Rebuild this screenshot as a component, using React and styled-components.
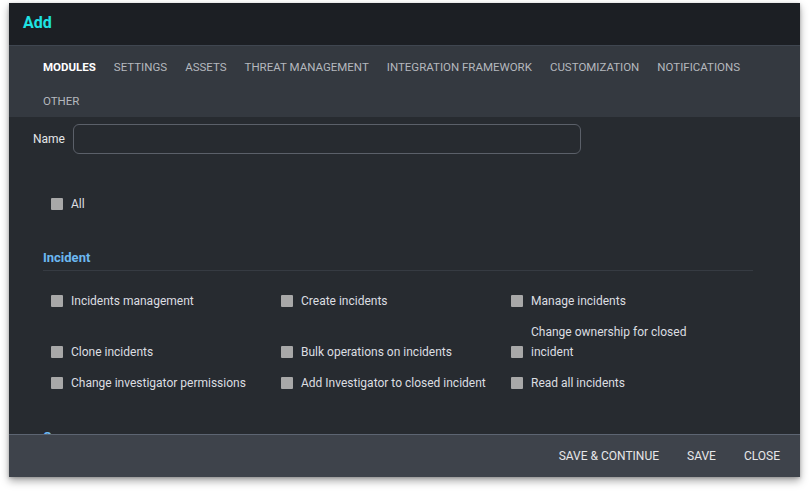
import React from "react";
import styled, { createGlobalStyle } from "styled-components";

const GlobalStyle = createGlobalStyle`
  html, body {
    margin: 0;
    padding: 0;
    background: #ffffff;
    font-family: Roboto, "Liberation Sans", sans-serif;
  }
`;

const tabs = [
  "MODULES",
  "SETTINGS",
  "ASSETS",
  "THREAT MANAGEMENT",
  "INTEGRATION FRAMEWORK",
  "CUSTOMIZATION",
  "NOTIFICATIONS",
  "OTHER",
];

const incidentPerms = [
  "Incidents management",
  "Create incidents",
  "Manage incidents",
  "Clone incidents",
  "Bulk operations on incidents",
  "Change ownership for closed incident",
  "Change investigator permissions",
  "Add Investigator to closed incident",
  "Read all incidents",
];

const App = () => {
  return (
    <>
      <GlobalStyle />
      <Page>
        <Dialog>
          <Header>
            <Title>Add</Title>
          </Header>
          <TabBar>
            {tabs.map((t, i) => (
              <Tab key={t} active={i === 0}>
                {t}
              </Tab>
            ))}
          </TabBar>
          <Body>
            <NameRow>
              <Label>Name</Label>
              <Input />
            </NameRow>
            <AllRow>
              <Check>
                <Box />
                <CheckText>All</CheckText>
              </Check>
            </AllRow>
            <Section>
              <SectionTitle>Incident</SectionTitle>
              <Grid>
                {incidentPerms.map((p) => (
                  <Check key={p}>
                    <Box />
                    <CheckText>{p}</CheckText>
                  </Check>
                ))}
              </Grid>
            </Section>
            <Section>
              <SectionTitle>Queue</SectionTitle>
            </Section>
          </Body>
          <Footer>
            <FooterButton>SAVE &amp; CONTINUE</FooterButton>
            <FooterButton>SAVE</FooterButton>
            <FooterButton>CLOSE</FooterButton>
          </Footer>
        </Dialog>
      </Page>
    </>
  );
};

export default App;

const Page = styled.div`
  width: 809px;
  height: 492px;
  padding: 3px 0 0 9px;
  box-sizing: border-box;
  overflow: hidden;
`;

const Dialog = styled.div`
  width: 791px;
  height: 474px;
  display: flex;
  flex-direction: column;
  background: #272b30;
  box-shadow: 0 4px 8px rgba(0, 0, 0, 0.35), 0 1px 3px rgba(0, 0, 0, 0.2);
  overflow: hidden;
`;

const Header = styled.div`
  height: 43px;
  flex-shrink: 0;
  background: #1c1f24;
  display: flex;
  align-items: center;
  padding-left: 14px;
  border-bottom: 1px solid #3f4650;
  box-sizing: border-box;
`;

const Title = styled.div`
  color: #1ee3e3;
  font-size: 16px;
  font-weight: 700;
  margin-top: -3px;
`;

const TabBar = styled.div`
  flex-shrink: 0;
  height: 71px;
  box-sizing: border-box;
  background: #343940;
  display: flex;
  flex-wrap: wrap;
  align-content: flex-start;
  column-gap: 18px;
  padding: 4px 40px 0 34px;
`;

const Tab = styled.div`
  height: 34px;
  line-height: 34px;
  font-size: 11.5px;
  font-weight: ${(p) => (p.active ? 700 : 400)};
  color: ${(p) => (p.active ? "#ffffff" : "#b4b8be")};
  white-space: nowrap;
`;

const Body = styled.div`
  flex: 1;
  overflow: hidden;
  padding: 7px 0 0 24px;
`;

const NameRow = styled.div`
  display: flex;
  align-items: center;
  gap: 8px;
`;

const Label = styled.div`
  color: #e4e6e8;
  font-size: 12px;
  margin-top: -1px;
`;

const Input = styled.div`
  width: 508px;
  height: 30px;
  box-sizing: border-box;
  border: 1px solid #5b6069;
  border-radius: 6px;
  background: #272b30;
`;

const AllRow = styled.div`
  padding: 40px 0 0 18px;
`;

const Check = styled.div`
  display: flex;
  align-items: flex-end;
  gap: 8px;
`;

const Box = styled.div`
  width: 12px;
  height: 12px;
  flex-shrink: 0;
  background: #a8a8a8;
  border-radius: 1px;
  margin-bottom: 4px;
`;

const CheckText = styled.div`
  color: #dcdee1;
  font-size: 12px;
  line-height: 20px;
`;

const Section = styled.div`
  padding: 33px 0 0 10px;
  width: 710px;
`;

const SectionTitle = styled.div`
  color: #6cb8f0;
  font-size: 13px;
  font-weight: 700;
  height: 23px;
  line-height: 22px;
  border-bottom: 1px solid #363b42;
`;

const Grid = styled.div`
  display: grid;
  grid-template-columns: 230px 230px 190px;
  row-gap: 11px;
  align-items: end;
  padding: 20px 0 0 8px;
`;

const Footer = styled.div`
  flex-shrink: 0;
  height: 43px;
  box-sizing: border-box;
  background: #3e434b;
  border-top: 1px solid #5d6572;
  display: flex;
  align-items: center;
  justify-content: flex-end;
  gap: 28px;
  padding-right: 20px;
`;

const FooterButton = styled.div`
  color: #e6e7e9;
  font-size: 12px;
  cursor: pointer;
`;
